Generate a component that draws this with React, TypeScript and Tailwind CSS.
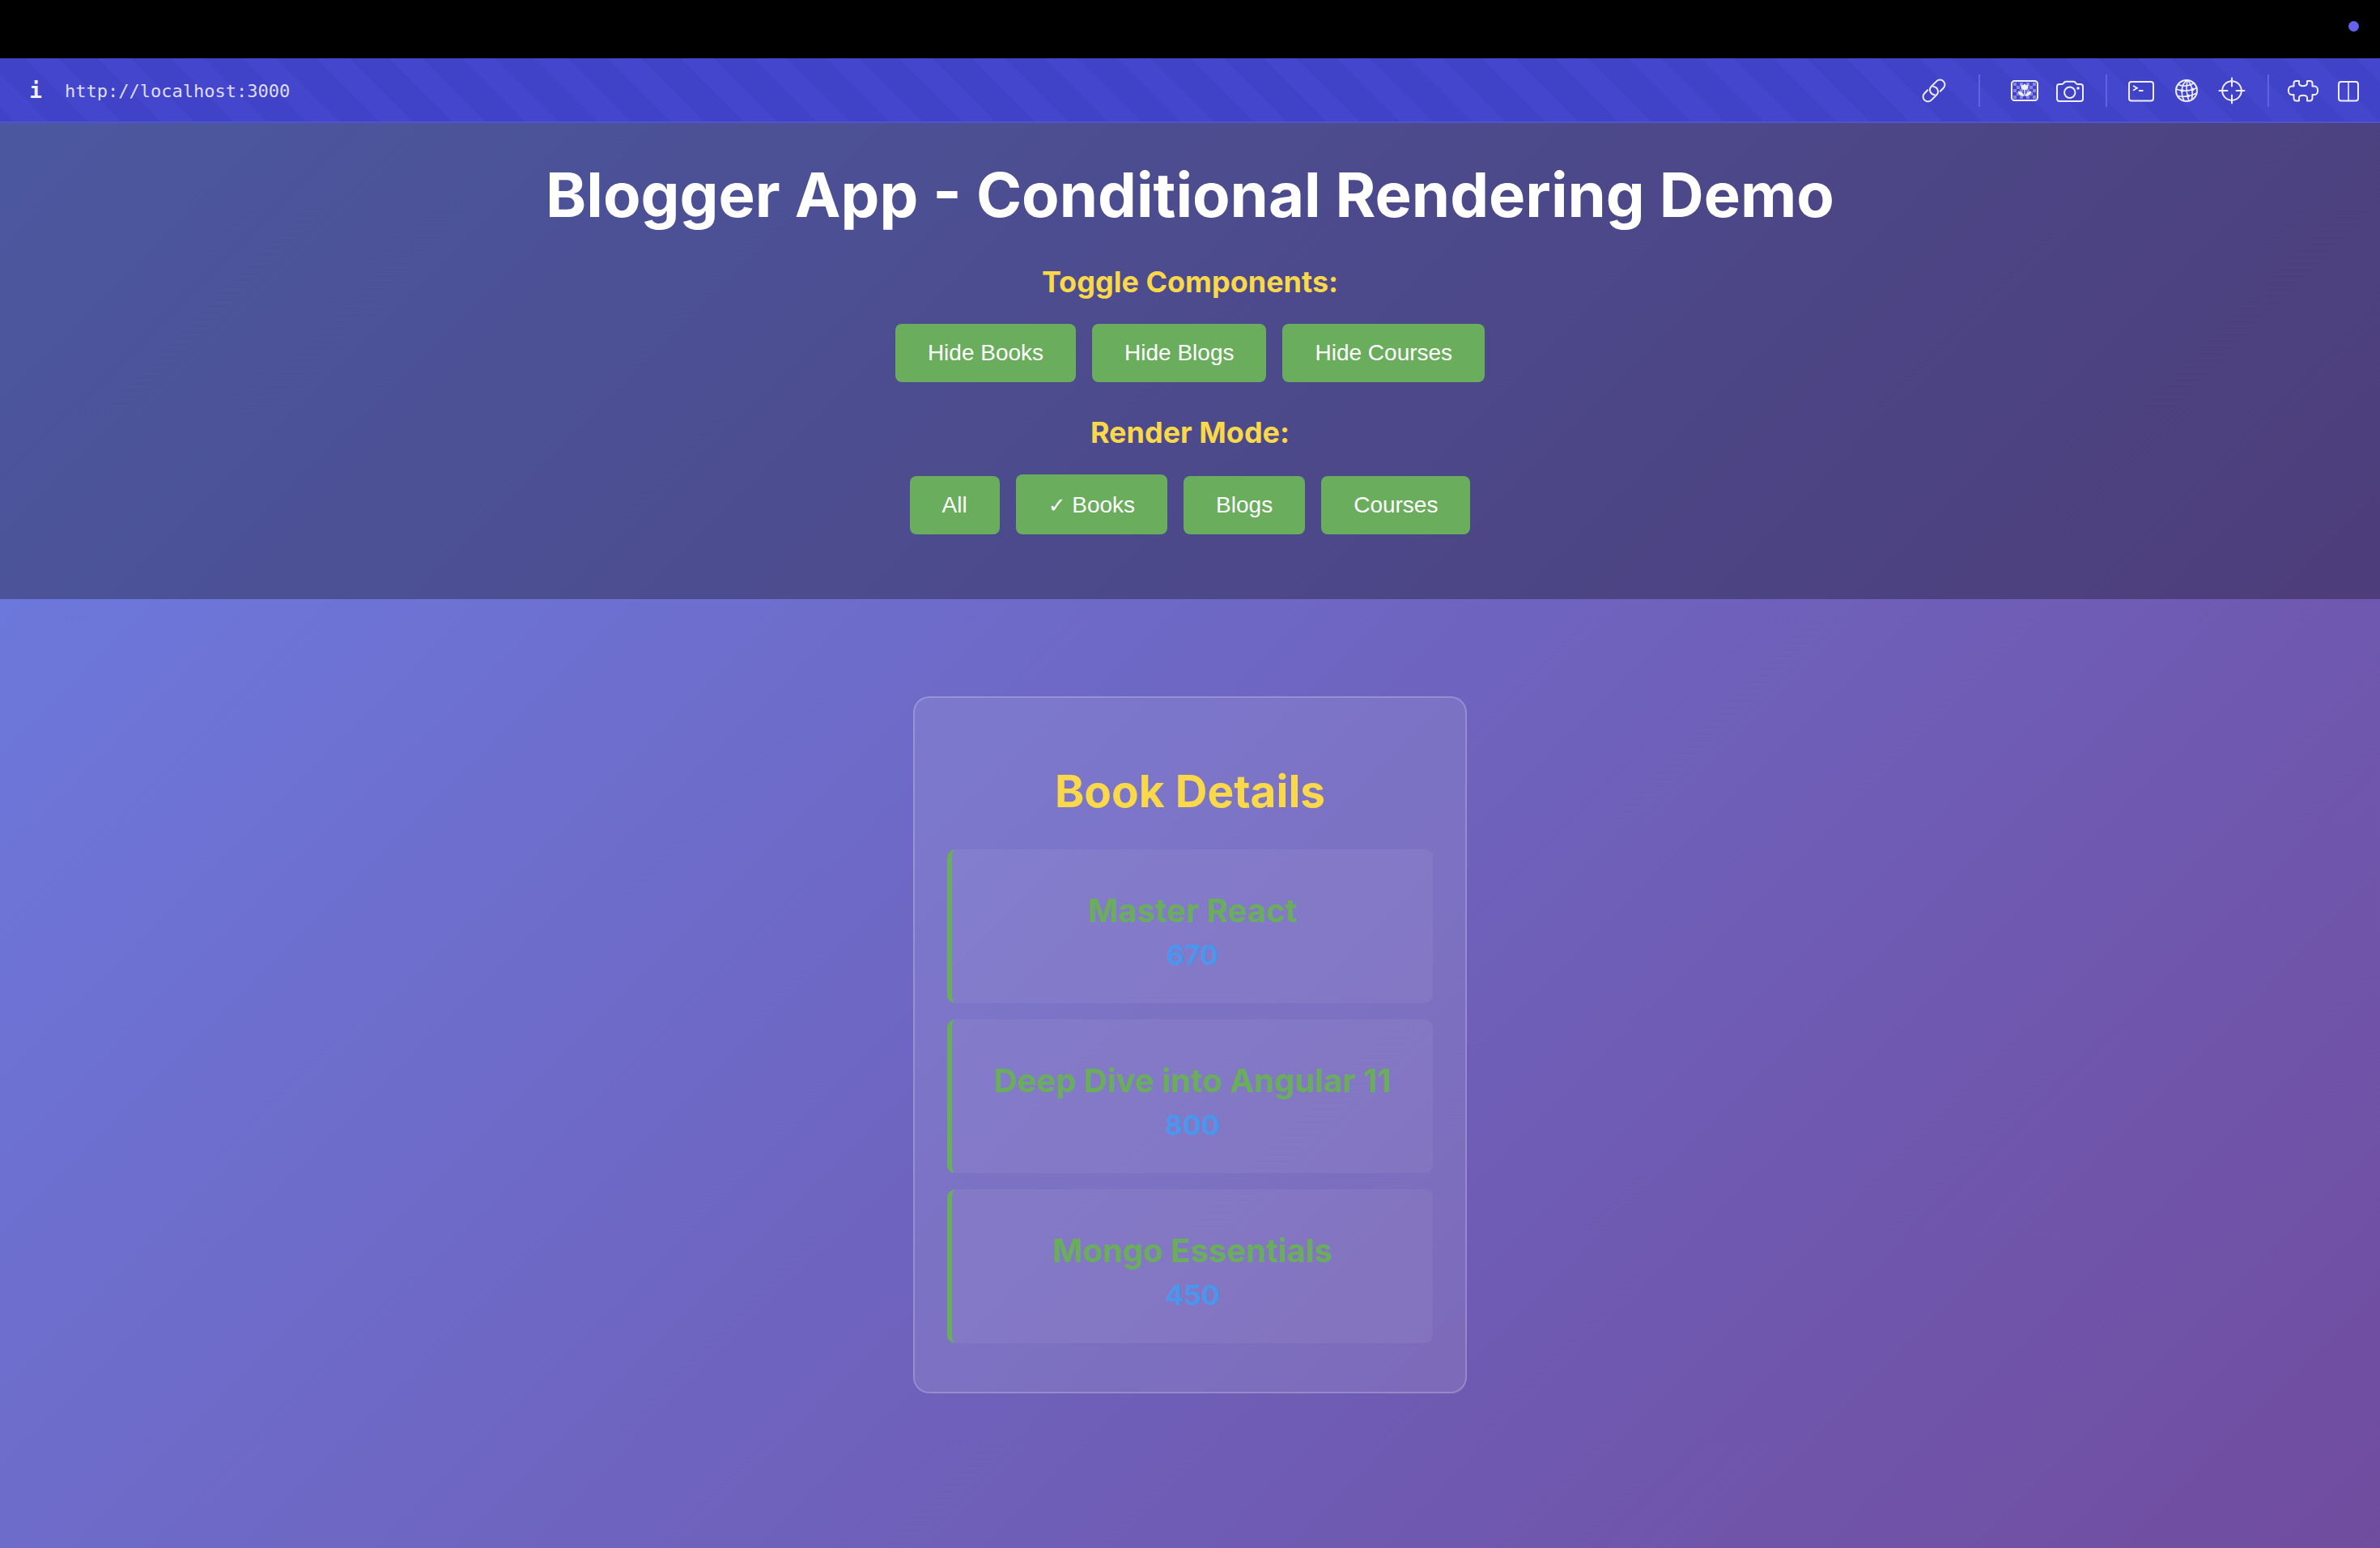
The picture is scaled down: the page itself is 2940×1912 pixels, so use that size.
import type { ReactNode } from "react";

const books = [
  { name: "Master React", price: 670 },
  { name: "Deep Dive into Angular 11", price: 800 },
  { name: "Mongo Essentials", price: 450 },
];

function Icon({ children }: { children: ReactNode }) {
  return (
    <svg
      viewBox="0 0 40 40"
      className="size-10"
      fill="none"
      stroke="currentColor"
      strokeWidth="2"
      strokeLinecap="round"
      strokeLinejoin="round"
      aria-hidden="true"
    >
      {children}
    </svg>
  );
}

function ToolButton({ label, children }: { label: string; children: ReactNode }) {
  return (
    <button type="button" aria-label={label} className="flex w-14 items-center justify-center text-[#eeeefc]">
      <Icon>{children}</Icon>
    </button>
  );
}

// Transparency squares on both sides of the flower
const checker: [number, number][] = [];
for (let row = 0; row < 5; row++) {
  for (const col of [0, 1, 2, 4, 5, 6]) {
    if ((row + col) % 2 === 0) checker.push([6 + col * 4, 10 + row * 4]);
  }
}

function Toolbar() {
  return (
    <div className="flex h-20 items-center bg-[linear-gradient(45deg,#4042c8_16.67%,#4447cd_16.67%_40%,#4042c8_40%_66.67%,#4447cd_66.67%_90%,#4042c8_90%)] bg-[length:90px_90px] pr-[11px] pl-6 shadow-[inset_0_-2px_0_#5054cb]">
      <button
        type="button"
        aria-label="Site information"
        className="w-10 text-center font-['DejaVu_Sans_Mono',monospace] text-[26px] leading-none font-bold text-[#f0f0fd]"
      >
        i
      </button>
      <input
        aria-label="Address"
        defaultValue="http://localhost:3000"
        className="ml-4 min-w-0 flex-1 bg-transparent font-['DejaVu_Sans_Mono',monospace] text-[22px] text-[#dedef8] outline-none"
      />
      <div className="flex items-center">
        <ToolButton label="Copy link">
          <g transform="translate(20 20) rotate(-45)">
            <path d="M5 6H10.5A6 6 0 0 0 10.5 -6H1.5A6 6 0 0 0 -3 4" />
            <path d="M-5 -6H-10.5A6 6 0 0 0 -10.5 6H-1.5A6 6 0 0 0 3 -4" />
          </g>
        </ToolButton>
        <span className="mx-[27px] h-10 w-0.5 bg-[#6063e0]" />
        <ToolButton label="Images">
          <g fill="currentColor" stroke="none" opacity="0.4">
            {checker.map(([x, y]) => (
              <rect key={`${x}-${y}`} x={x} y={y} width="4" height="4" />
            ))}
          </g>
          <rect x="4" y="8" width="32" height="24" rx="3.5" />
          <g fill="currentColor" stroke="none">
            <path d="M15.5 12l2.2 1.4L20 11.400l2.300 2 2.200-1.400v3.500a4.500 3.500 0 0 1-9 0z" />
            <path d="M19.300 18h1.400v8h-1.400z" />
            <path d="M19.500 26.800c-4.500 0-7.300-2-7.800-6 3.800-.4 6.800 1.800 7.800 6z" />
            <path d="M20.500 26.800c4.500 0 7.300-2 7.800-6-3.800-.4-6.800 1.800-7.800 6z" />
          </g>
        </ToolButton>
        <ToolButton label="Screenshot">
          <path d="M4 15a3 3 0 0 1 3-3h3.500c1.500 0 2-3.200 4.500-3.200h9.500c2.500 0 3 3.200 4.500 3.200H33a3 3 0 0 1 3 3v15a3 3 0 0 1-3 3H7a3 3 0 0 1-3-3z" />
          <circle cx="19.8" cy="22.3" r="6.7" />
          <circle cx="30" cy="17" r="1.8" fill="currentColor" stroke="none" />
        </ToolButton>
        <span className="mr-3.5 ml-4 h-10 w-0.5 bg-[#6063e0]" />
        <ToolButton label="Console">
          <rect x="5" y="9" width="30" height="23.5" rx="3" />
          <path d="M10 14l5 2.800-5 3M17 20h5.500" strokeWidth="1.8" strokeLinecap="butt" strokeLinejoin="miter" />
        </ToolButton>
        <ToolButton label="Network">
          <circle cx="20" cy="20" r="13" />
          <g strokeWidth="1.6">
            <path d="M21 7c-7 4-9 15-4 25.5" />
            <path d="M21 7c-1.5 8-1.5 17 2 25.5" />
            <path d="M21 7c5 4 7.5 13 5.5 24" />
            <path d="M9.5 12.5c6 2.5 14 2 20-2" />
            <path d="M7 18c7 3 18 3 25.5-1.5" />
            <path d="M9 26.5c7 1.5 16.500.5 22.500-3" />
          </g>
          <g fill="currentColor" stroke="none">
            <circle cx="14.5" cy="20" r="2" />
            <circle cx="27.5" cy="18.5" r="2" />
            <circle cx="22" cy="26.5" r="2" />
          </g>
        </ToolButton>
        <ToolButton label="Inspect">
          <circle cx="20" cy="20" r="11.8" />
          <path d="M20 4.5v10M20 25.5v10M4.5 20h10M25.5 20h10" />
        </ToolButton>
        <span className="mr-3.5 ml-4 h-10 w-0.5 bg-[#6063e0]" />
        <ToolButton label="Extensions">
          <path d="M11.500 8H15v2.500c-.5 5 10.500 5 10 0V8h3.500c2 0 3 1 3 3v3.500h2.500c5.500 0 5.500 10.500 0 10.500h-2.500v3.500c0 2-1 4-3 4H25V29c.5-4.500-10.500-4.500-10 0v3.500h-3.500c-2 0-3-2-3-4V25H6c-5.500 0-5.500-10.500 0-10.500h2.500V11c0-2 1-3 3-3z" />
        </ToolButton>
        <ToolButton label="Split view">
          <rect x="8" y="9" width="24" height="23.5" rx="3" />
          <path d="M20 9v23.5" opacity="0.8" />
        </ToolButton>
      </div>
    </div>
  );
}

function Button({ active = false, children }: { active?: boolean; children: ReactNode }) {
  return (
    <button
      type="button"
      className={`rounded-lg bg-[#69ad5d] px-10 pb-5 font-['Liberation_Sans',Arial,sans-serif] text-[28px] leading-8 text-white ${active ? "pt-[22px]" : "pt-5"}`}
    >
      {children}
    </button>
  );
}

export default function App() {
  return (
    <div className="flex min-h-screen flex-col font-[Inter,sans-serif]">
      <div className="flex h-[72px] items-start justify-end bg-black pt-[26px] pr-[26px]">
        <span className="size-[13px] rounded-full bg-[#6562eb]" />
      </div>
      <Toolbar />
      <div className="flex flex-1 flex-col bg-[linear-gradient(135deg,#6c7ee4,#704c9e)] text-center">
        <header className="bg-black/30 px-10 pt-10 pb-20 text-white">
          <h1 className="text-[76px] leading-24 font-bold">Blogger App - Conditional Rendering Demo</h1>
          <h3 className="mt-[38px] text-[36px] leading-11 font-bold text-[#f9d849]">Toggle Components:</h3>
          <div className="mt-[30px] flex items-baseline justify-center gap-5">
            <Button>Hide Books</Button>
            <Button>Hide Blogs</Button>
            <Button>Hide Courses</Button>
          </div>
          <h3 className="mt-10 text-[36px] leading-11 font-bold text-[#f9d849]">Render Mode:</h3>
          <div className="mt-[30px] flex items-baseline justify-center gap-5">
            <Button>All</Button>
            <Button active>
              <span className="font-['DejaVu_Sans',sans-serif] text-[26px] leading-none">✓</span> Books
            </Button>
            <Button>Blogs</Button>
            <Button>Courses</Button>
          </div>
        </header>
        <main className="flex justify-center pt-[120px]">
          <section className="w-[684px] rounded-[20px] border-2 border-white/20 bg-white/10 px-10 pt-20 pb-[60px]">
            <h2 className="text-[55px] leading-[70px] font-bold text-[#f9d849]">Book Details</h2>
            <ul className="mt-[37px] flex flex-col gap-5">
              {books.map((book) => (
                <li key={book.name} className="rounded-[10px] border-l-[6px] border-[#69ad5d] bg-white/5 pt-[50px] pb-[38px]">
                  <h3 className="text-[40px] leading-13 font-bold text-[#69ad5d]">{book.name}</h3>
                  <p className="mt-2 text-[34px] leading-[42px] font-bold text-[#4996ef]">{book.price}</p>
                </li>
              ))}
            </ul>
          </section>
        </main>
      </div>
    </div>
  );
}
